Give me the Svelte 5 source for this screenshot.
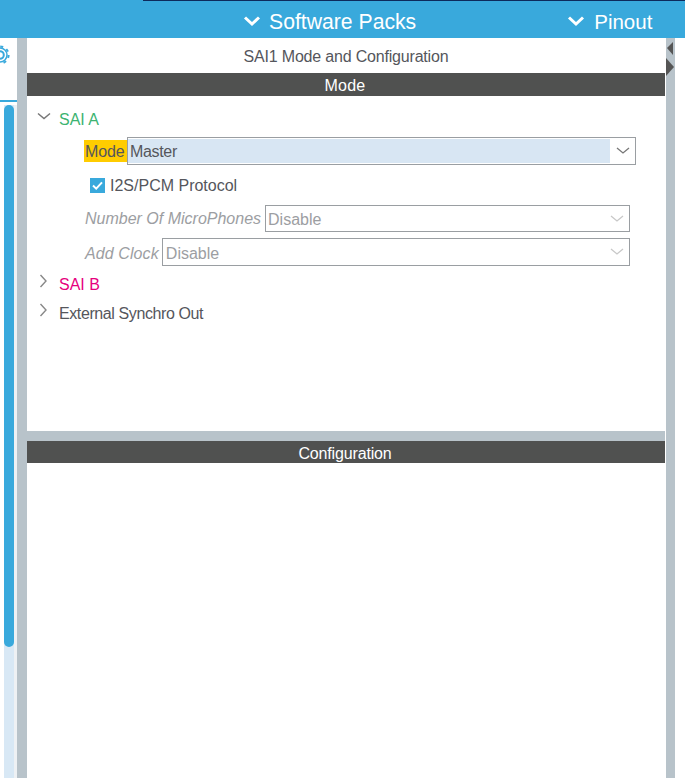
<script>
  const dropdowns = [
    { label: 'Number Of MicroPhones', value: 'Disable' },
    { label: 'Add Clock', value: 'Disable' }
  ];
</script>

<div class="page">
  <header class="top">
    <div class="strip"></div>
    <div class="tabs">
      <div class="tab packs">
        <svg class="chev" width="18" height="12" viewBox="0 0 18 12"><path d="M2 2.5 L9 9 L16 2.5" fill="none" stroke="#fff" stroke-width="3"/></svg>
        <span>Software Packs</span>
      </div>
      <div class="tab pinout">
        <svg class="chev" width="18" height="12" viewBox="0 0 18 12"><path d="M2 2.5 L9 9 L16 2.5" fill="none" stroke="#fff" stroke-width="3"/></svg>
        <span>Pinout</span>
      </div>
    </div>
  </header>

  <div class="body">
    <aside class="rail">
      <div class="gearbox">
        <svg width="17" height="24" viewBox="0 0 17 24">
          <g transform="translate(0 12)" fill="none" stroke="#39a9dc">
            <circle r="3.8" stroke-width="2"/>
            <circle r="7" stroke-width="1.5"/>
            <circle r="8.6" stroke-width="2" stroke-dasharray="3 3.75"/>
          </g>
        </svg>
      </div>
      <div class="railline"></div>
      <div class="track"><div class="channel"><div class="thumb"></div></div></div>
    </aside>
    <div class="sash"></div>

    <main class="main">
      <div class="title">SAI1 Mode and Configuration</div>
      <div class="bar mode">Mode</div>
      <section class="modepanel">
        <div class="row sai-a">
          <svg class="tw" width="14" height="10" viewBox="0 0 14 10"><path d="M1 1.5 L7 6.5 L13 1.5" fill="none" stroke="#777" stroke-width="1.5"/></svg>
          <span class="green">SAI A</span>
        </div>
        <div class="moderow">
          <span class="hl">Mode</span>
          <div class="select master">
            <span class="val">Master</span>
            <span class="arrow"><svg width="14" height="8" viewBox="0 0 14 8"><path d="M1 1 L7 6 L13 1" fill="none" stroke="#777" stroke-width="1.3"/></svg></span>
          </div>
        </div>
        <div class="check">
          <span class="box"><svg width="15" height="15" viewBox="0 0 15 15"><path d="M3 7.5 L6.2 10.6 L12 4.4" fill="none" stroke="#fff" stroke-width="2"/></svg></span>
          <span>I2S/PCM Protocol</span>
        </div>
        {#each dropdowns as d}
          <div class="drow">
            <span class="dlabel">{d.label}</span>
            <div class="select off">
              <span class="val">{d.value}</span>
              <span class="arrow"><svg width="14" height="8" viewBox="0 0 14 8"><path d="M1 1 L7 6 L13 1" fill="none" stroke="#c8c8c8" stroke-width="1.3"/></svg></span>
            </div>
          </div>
        {/each}
        <div class="row sai-b">
          <svg class="tw" width="10" height="14" viewBox="0 0 10 14"><path d="M1.5 1 L7 7 L1.5 13" fill="none" stroke="#888" stroke-width="1.4"/></svg>
          <span class="pink">SAI B</span>
        </div>
        <div class="row ext">
          <svg class="tw" width="10" height="14" viewBox="0 0 10 14"><path d="M1.5 1 L7 7 L1.5 13" fill="none" stroke="#888" stroke-width="1.4"/></svg>
          <span>External Synchro Out</span>
        </div>
      </section>
      <div class="hsash"></div>
      <div class="bar conf">Configuration</div>
      <section class="confpanel"></section>
    </main>

    <div class="rsash">
      <svg class="tri" width="9" height="40" viewBox="0 0 9 40">
        <path d="M7 4 L1 10 L7 17 Z" fill="#555"/>
        <path d="M0 20 L8 29 L0 38 Z" fill="#555"/>
      </svg>
    </div>
    <div class="rest"></div>
  </div>
</div>

<style>
  :global(body) { margin: 0; background: #fff; }
  .page { width: 685px; height: 778px; overflow: hidden; display: flex; flex-direction: column; font-family: "Liberation Sans", Arial, sans-serif; color: #55565c; }
  .top { height: 38px; background: #39a9dc; position: relative; flex: none; }
  .strip { position: absolute; left: 143px; right: 0; top: 0; height: 1px; background: #0d2a5c; }
  .tabs { display: flex; height: 38px; align-items: center; color: #fff; font-size: 21.2px; }
  .tab { display: flex; align-items: center; gap: 8px; padding-top: 6px; box-sizing: border-box; height: 38px; }
  .packs { margin-left: 243px; }
  .pinout { margin-left: 151px; font-size: 20.5px; gap: 9px; }
  .chev { flex: none; margin-top: -3px; }
  .body { flex: 1; display: flex; min-height: 0; }
  .rail { width: 17px; flex: none; display: flex; flex-direction: column; background: #fff; }
  .gearbox { height: 62px; flex: none; box-sizing: border-box; padding-top: 5px; overflow: hidden; }
  .gearbox svg { display: block; }
  .railline { height: 2px; background: #39a9dc; flex: none; }
  .track { flex: 1; margin-top: 3px; padding-left: 4px; display: flex; background: linear-gradient(90deg, #fff 0 14px, #eef1f4 14px); }
  .channel { width: 10px; height: 100%; background: #d8e8f5; }
  .thumb { height: 542px; background: #39a9dc; border-radius: 5px; }
  .sash { width: 10px; flex: none; background: #b8c3ca; }
  .main { width: 638px; flex: none; display: flex; flex-direction: column; background: #fff; }
  .title { height: 35px; line-height: 38px; text-align: center; font-size: 16px; letter-spacing: -0.19px; flex: none; }
  .bar { background: #505150; color: #fff; text-align: center; font-size: 16px; flex: none; padding-right: 2px; }
  .mode { height: 23px; line-height: 26px; letter-spacing: 0.25px; }
  .conf { height: 22px; line-height: 26px; letter-spacing: -0.15px; }
  .modepanel { height: 335px; flex: none; position: relative; font-size: 16px; box-sizing: border-box; padding-top: 13px; }
  .row { display: flex; align-items: center; height: 22px; padding-left: 32px; position: relative; }
  .tw { position: absolute; }
  .sai-a .tw { left: 10px; top: 3px; }
  .sai-b .tw, .ext .tw { left: 12px; top: 0; }
  .ext span { letter-spacing: -0.4px; }
  .green { color: #3cb371; }
  .pink { color: #e6007e; }
  .moderow { display: flex; margin: 6px 0 0 57px; height: 28px; width: 552px; }
  .hl { background: #ffcc00; height: 22px; line-height: 23px; align-self: center; width: 43px; flex: none; box-sizing: border-box; padding-left: 1px; letter-spacing: -0.1px; }
  .select { flex: 1; display: flex; box-sizing: border-box; border: 1px solid #9a9ea2; background: #fff; }
  .master .val { flex: 1; background: #d8e6f3; margin: 1px 0; line-height: 25px; padding-left: 2px; letter-spacing: -0.33px; }
  .arrow { width: 25px; display: flex; align-items: center; justify-content: center; flex: none; }
  .check { display: flex; align-items: center; gap: 5px; margin: 6px 0 0 63px; height: 28px; }
  .check span:last-child { padding-top: 2px; }
  .box { width: 15px; height: 15px; background: #39a9dc; display: block; flex: none; }
  .box svg { display: block; }
  .drow { display: flex; align-items: center; margin-left: 58px; width: 545px; height: 27px; margin-top: 6px; font-size: 16px; }
  .dlabel { font-style: italic; color: #9c9ea2; margin-right: 4px; white-space: nowrap; padding-top: 1px; }
  .off { height: 100%; color: #9c9ea2; align-items: center; padding-left: 2px; }
  .off .val { flex: 1; padding-top: 2px; }
  .drow + .drow { margin-top: 6px; height: 28px; }
  .drow + .drow .dlabel { margin-right: 3px; padding-top: 3px; letter-spacing: 0.1px; }
  .drow + .drow .val { padding-top: 3px; }
  .drow + .drow .off { padding-left: 3px; }
  .sai-b { margin-top: 8px; }
  .ext { margin-top: 7px; }
  .hsash { height: 10px; background: #b8c3ca; flex: none; }
  .confpanel { flex: 1; }
  .rsash { width: 9px; margin-left: 1px; background: #b8c3ca; flex: none; position: relative; }
  .tri { position: absolute; left: 0; top: 0; }
  .rest { flex: 1; background: #fff; }
</style>
